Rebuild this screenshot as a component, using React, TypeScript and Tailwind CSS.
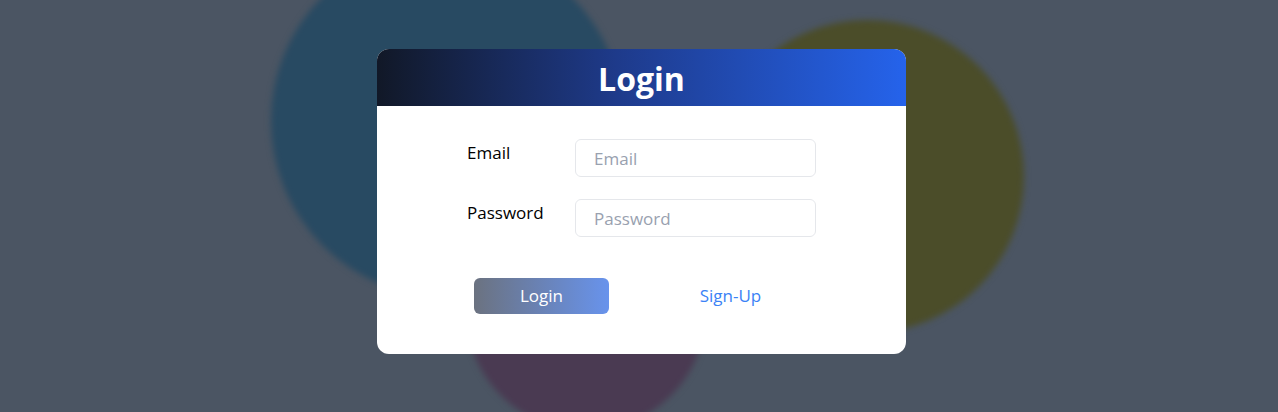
import React from "react";

export default function App() {
  return (
    <div
      className="relative h-screen w-full overflow-hidden bg-[#4b5563] flex items-start justify-center"
      style={{ fontFamily: '"Open Sans", "Noto Sans", sans-serif' }}
    >
      {/* background blobs */}
      <div className="absolute left-[271px] top-[-55px] h-[352px] w-[352px] rounded-full bg-[#284a62] blur-[3px]" />
      <div className="absolute left-[711px] top-[20px] h-[313px] w-[313px] rounded-full bg-[#4b4d29] blur-[3px]" />
      <div className="absolute left-[466px] top-[191px] h-[240px] w-[240px] rounded-full bg-[#4a3a52] blur-[3px]" />

      <div className="relative ml-[5px] mt-[49px] w-[529px] h-[305px] rounded-xl overflow-hidden bg-white flex flex-col">
        <div className="h-[57px] pt-[2px] bg-[linear-gradient(to_right,#111827,#1e3a8a_45%,#2563eb)] flex items-center justify-center">
          <h1 className="text-[32px] font-bold text-white leading-none">Login</h1>
        </div>
        <div className="flex flex-col items-center pt-[33px]">
          <div className="flex flex-col gap-[22px]">
            <div className="flex items-start">
              <label className="w-[108px] text-[17px] leading-7 text-black">Email</label>
              <input
                className="w-[241px] h-[38px] rounded-md border border-gray-200 px-[18px] text-[17px] text-gray-700 placeholder:text-gray-400 outline-none"
                placeholder="Email"
                type="email"
              />
            </div>
            <div className="flex items-start">
              <label className="w-[108px] text-[17px] leading-7 text-black">Password</label>
              <input
                className="w-[241px] h-[38px] rounded-md border border-gray-200 px-[18px] text-[17px] text-gray-700 placeholder:text-gray-400 outline-none"
                placeholder="Password"
                type="password"
              />
            </div>
          </div>
          <div className="mt-[41px] flex gap-[54px] pr-[11px]">
            <button className="w-[135px] h-[36px] rounded-md bg-[linear-gradient(to_right,#6b7280,#6893ec)] text-[17px] text-white">
              Login
            </button>
            <button className="w-[135px] h-[36px] text-[17px] text-[#3b82f6]">Sign-Up</button>
          </div>
        </div>
      </div>
    </div>
  );
}
